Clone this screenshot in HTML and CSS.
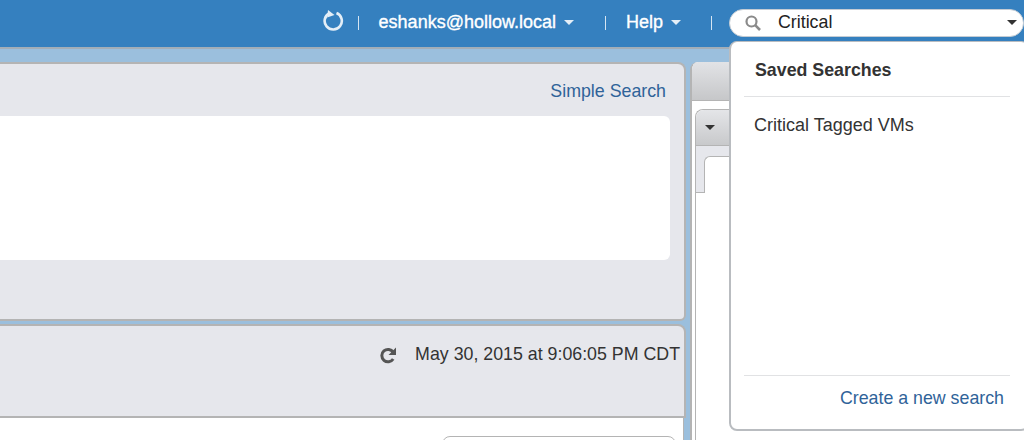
FILE: index.html
```html
<!DOCTYPE html>
<html lang="en">
<head>
    <meta charset="UTF-8">
    <meta name="viewport" content="width=device-width, initial-scale=1.0">
    <title>Search</title>
    <link rel="stylesheet" href="styles.css">
</head>
<body>
    <header class="topbar">
        <svg class="refresh-icon" width="22" height="24" viewBox="0 1 22 24">
            <path d="M7.5 6.2A8.6 8.6 0 1 0 14.5 6" fill="none" stroke="#e4eef7" stroke-width="2.6"/>
            <path d="M6 3L12.5 8L5.2 10.5Z" fill="#e4eef7"/>
        </svg>
        <span class="sep sep-first"></span>
        <span class="menu user-menu">eshanks@hollow.local<i class="caret"></i></span>
        <span class="sep sep-second"></span>
        <span class="menu help-menu">Help<i class="caret"></i></span>
        <span class="sep sep-third"></span>
        <div class="search-box">
            <svg class="search-icon" width="18" height="18" viewBox="0 0 18 18">
                <circle cx="7.5" cy="7.5" r="5" fill="none" stroke="#8a8a8a" stroke-width="2.2"/>
                <path d="M11.2 11.2L16 16" stroke="#8a8a8a" stroke-width="2.6"/>
            </svg>
            <span class="search-value">Critical</span>
            <i class="caret caret-dark"></i>
        </div>
    </header>

    <main class="content">
        <div class="left-col">
            <section class="panel search-panel">
                <a class="link simple-search">Simple Search</a>
                <div class="search-area"></div>
            </section>
            <section class="panel results-panel">
                <svg class="reload-icon" width="18" height="18" viewBox="0 0 18 18">
                    <path d="M14.2 6.2A6.2 6.2 0 1 0 14.2 13" fill="none" stroke="#555" stroke-width="3"/>
                    <path d="M17 1.5V9H9.5Z" fill="#555"/>
                </svg>
                <span class="timestamp">May 30, 2015 at 9:06:05 PM CDT</span>
            </section>
            <div class="results-body">
                <div class="results-button"></div>
            </div>
        </div>
        <div class="right-col">
            <div class="right-head"></div>
            <div class="right-body">
                <div class="sub-panel">
                    <div class="sub-head"><i class="caret caret-dark"></i></div>
                    <div class="tab-row"><div class="tab"></div></div>
                </div>
            </div>
        </div>
    </main>

    <div class="dropdown">
        <h3 class="dropdown-title">Saved Searches</h3>
        <div class="dropdown-list">
            <div class="dropdown-item">Critical Tagged VMs</div>
        </div>
        <div class="dropdown-foot">
            <a class="link">Create a new search</a>
        </div>
    </div>
</body>
</html>
```

FILE: styles.css
```css
/* Reset and basic styles */
* {
    margin: 0;
    padding: 0;
    box-sizing: border-box;
}

html, body {
    height: 440px;
    overflow: hidden;
}

body {
    font-family: "Liberation Sans", Arial, sans-serif;
    font-size: 17.8px;
    color: #333;
    background-color: #9bbfdd;
}

.link {
    color: #2f6399;
}

/* Top bar */
.topbar {
    height: 49px;
    display: flex;
    align-items: center;
    justify-content: flex-end;
    padding-bottom: 2px;
    background-color: #3580bf;
    border-bottom: 2px solid #a3aeb8;
}

.refresh-icon {
    margin-right: 14px;
    margin-bottom: 6px;
}

.sep {
    width: 1px;
    height: 14px;
    background-color: #d6e5f2;
}

.sep-first {
    margin-right: 20px;
}

.sep-second {
    margin-left: 31px;
    margin-right: 20px;
}

.sep-third {
    margin-left: 30px;
    margin-right: 17px;
}

.menu {
    color: #fff;
    font-size: 18px;
    display: flex;
    align-items: center;
    -webkit-text-stroke: 0.35px #fff;
}

.caret {
    display: inline-block;
    width: 0;
    height: 0;
    margin-left: 8px;
    border-left: 5px solid transparent;
    border-right: 5px solid transparent;
    border-top: 5px solid #e4eef7;
}

.caret-dark {
    border-top-color: #333;
}

.search-box {
    width: 295px;
    height: 28px;
    display: flex;
    align-items: center;
    background-color: #fff;
    border: 1px solid #c4ccd4;
    border-radius: 14px;
    padding-left: 14px;
    padding-right: 6px;
}

.search-value {
    margin-left: 16px;
    color: #222;
    flex: 1;
}

/* Main layout */
.content {
    display: flex;
    height: 391px;
    padding-top: 13px;
}

.left-col {
    width: 686px;
    display: flex;
    flex-direction: column;
}

.panel {
    flex: none;
    background-color: #e6e7ec;
    border-bottom: 2px solid #b4b4b4;
    border-right: 2px solid #b4b4b4;
    border-top: 2px solid #b4b4b4;
    border-top-right-radius: 8px;
}

.search-panel {
    height: 259px;
    padding: 18px 14px 0 0;
    border-bottom-right-radius: 6px;
    text-align: right;
}

.simple-search {
    display: block;
    padding-right: 4px;
    line-height: 18px;
}

.search-area {
    height: 144px;
    margin-top: 16px;
    background-color: #fff;
    border-radius: 0 6px 6px 0;
}

.results-panel {
    height: 94px;
    margin-top: 3px;
    padding: 18px 4px 0 0;
    display: flex;
    align-items: flex-start;
    justify-content: flex-end;
}

.reload-icon {
    margin-right: 18px;
    margin-top: 2px;
}

.timestamp {
    line-height: 20px;
    color: #333;
}

.results-body {
    flex: 1;
    min-height: 0;
    overflow: hidden;
    margin-right: 2px;
    background-color: #fff;
    padding-top: 18px;
    padding-left: 442px;
    padding-right: 7px;
    border-right: 1px solid #b4b4b4;
}

.results-button {
    height: 30px;
    border: 1px solid #b4b4b4;
    border-radius: 8px;
}

/* Right column */
.right-col {
    flex: 1;
    margin-left: 4px;
    display: flex;
    flex-direction: column;
    border-left: 2px solid #b4b4b4;
    background-color: #fff;
    border-top-left-radius: 8px;
    overflow: hidden;
}

.right-head {
    height: 39px;
    background: linear-gradient(#e2e3e6, #c6c7c9);
    border-bottom: 1px solid #b4b4b4;
}

.right-body {
    flex: 1;
    padding: 8px 0 0 3px;
}

.sub-panel {
    border: 1px solid #b4b4b4;
    border-right: none;
    border-bottom: none;
    border-top-left-radius: 8px;
    height: 100%;
    background-color: #fff;
}

.sub-head {
    height: 36px;
    display: flex;
    align-items: center;
    padding-left: 9px;
    background: linear-gradient(#e4e5e8, #c8c9cb);
    border-bottom: 1px solid #b4b4b4;
    border-top-left-radius: 8px;
}

.sub-head .caret {
    margin-left: 0;
}

.tab-row {
    height: 47px;
    padding: 10px 0 0 8px;
    background-color: #e6e7ec;
    border-bottom: 1px solid #b4b4b4;
}

.tab {
    height: 37px;
    background-color: #fff;
    border: 1px solid #b4b4b4;
    border-bottom: none;
    border-right: none;
    border-top-left-radius: 6px;
}

/* Saved searches dropdown */
.dropdown {
    position: absolute;
    left: 729px;
    top: 41px;
    width: 300px;
    height: 390px;
    display: flex;
    flex-direction: column;
    padding: 0 18px 0 13px;
    background-color: #fff;
    border: 1px solid #b9bcc0;
    border-bottom-width: 2px;
    border-left-width: 2px;
    border-radius: 8px;
}

.dropdown-title {
    height: 55px;
    padding: 18px 0 0 11px;
    font-size: 17.8px;
    line-height: 20px;
    color: #333;
    border-bottom: 1px solid #e1e2e4;
}

.dropdown-list {
    flex: 1;
    padding: 18px 0 0 10px;
}

.dropdown-item {
    font-size: 18px;
    line-height: 20px;
    color: #333;
}

.dropdown-foot {
    height: 54px;
    padding: 12px 6px 0 0;
    line-height: 20px;
    text-align: right;
    border-top: 1px solid #e1e2e4;
}
```
